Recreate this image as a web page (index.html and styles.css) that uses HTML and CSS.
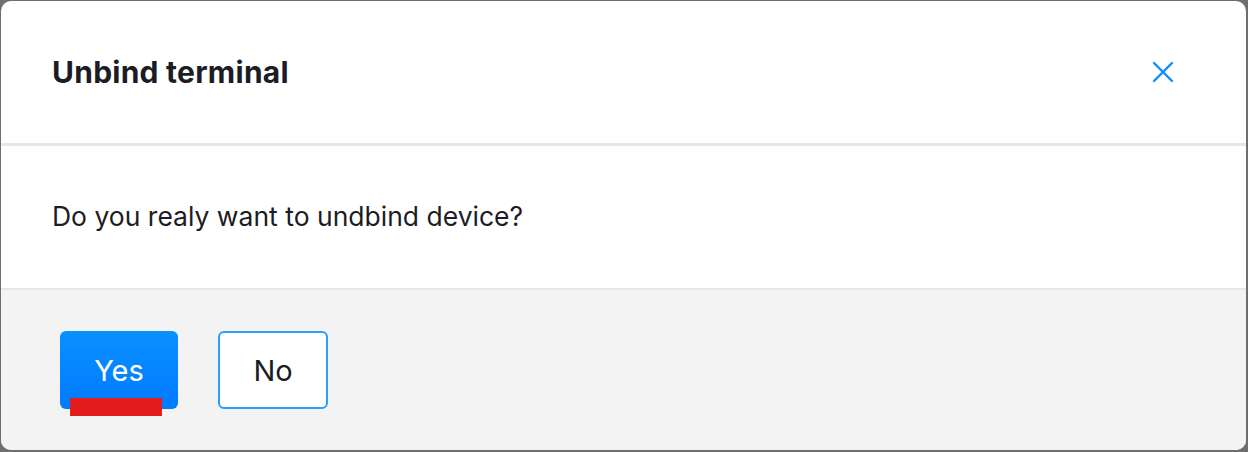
FILE: index.html
```html
<!DOCTYPE html>
<html lang="en">
<head>
  <meta charset="UTF-8" />
  <meta name="viewport" content="width=device-width, initial-scale=1.0"/>
  <title>Unbind terminal</title>
  <link rel="stylesheet" href="styles.css">
</head>
<body>
  <div class="modal">
    <div class="modal-header">
      <h2 class="modal-title">Unbind terminal</h2>
      <button class="close" aria-label="Close">
        <svg width="22" height="22" viewBox="0 0 22 22">
          <path d="M2 2 L20 20 M20 2 L2 20" stroke="#0a8cff" stroke-width="2.4" stroke-linecap="round"/>
        </svg>
      </button>
    </div>
    <div class="modal-body">
      <p>Do you realy want to undbind device?</p>
    </div>
    <div class="modal-footer">
      <button class="btn btn-yes">Yes<span class="mark"></span></button>
      <button class="btn btn-no">No</button>
    </div>
  </div>
</body>
</html>
```

FILE: styles.css
```css
html, body {
  height: 100%;
}

body {
  margin: 0;
  padding: 1px 2px 2px 1px;
  box-sizing: border-box;
  background: #6e6e6e;
  font-family: Inter, 'Noto Sans', sans-serif;
  color: #1c1c24;
}

.modal {
  height: 100%;
  background: #fff;
  border-radius: 10px;
  overflow: hidden;
  display: flex;
  flex-direction: column;
}

.modal-header {
  height: 142px;
  display: flex;
  align-items: center;
  justify-content: space-between;
  padding: 0 72px 0 51px;
  border-bottom: 3px solid #e4e7eb;
}

.modal-title {
  margin: 0;
  font-size: 30px;
  font-weight: 700;
  letter-spacing: 0.25px;
}

.close {
  border: none;
  background: none;
  padding: 0;
  display: flex;
  cursor: pointer;
}

.modal-body {
  height: 140px;
  display: flex;
  align-items: center;
  padding: 0 51px 2px;
  border-bottom: 2px solid #e4e7eb;
}

.modal-body p {
  margin: 0;
  font-size: 26.5px;
  letter-spacing: 0;
}

.modal-footer {
  flex: 1;
  background: #f3f3f3;
  display: flex;
  align-items: flex-start;
  gap: 40px;
  padding: 41px 59px 0;
}

.btn {
  height: 78px;
  border-radius: 6px;
  font-family: inherit;
  font-size: 29px;
  cursor: pointer;
}

.btn-yes {
  position: relative;
  width: 118px;
  border: none;
  color: #fff;
  background: linear-gradient(180deg, #0a90ff, #007bff);
}

.btn-no {
  width: 110px;
  border: 2px solid #2b9dff;
  background: #fff;
  color: #1c1c24;
}

/* red highlight over the button */
.mark {
  position: absolute;
  left: 10px;
  bottom: -7px;
  width: 92px;
  height: 18px;
  background: #e31c1c;
}
```
